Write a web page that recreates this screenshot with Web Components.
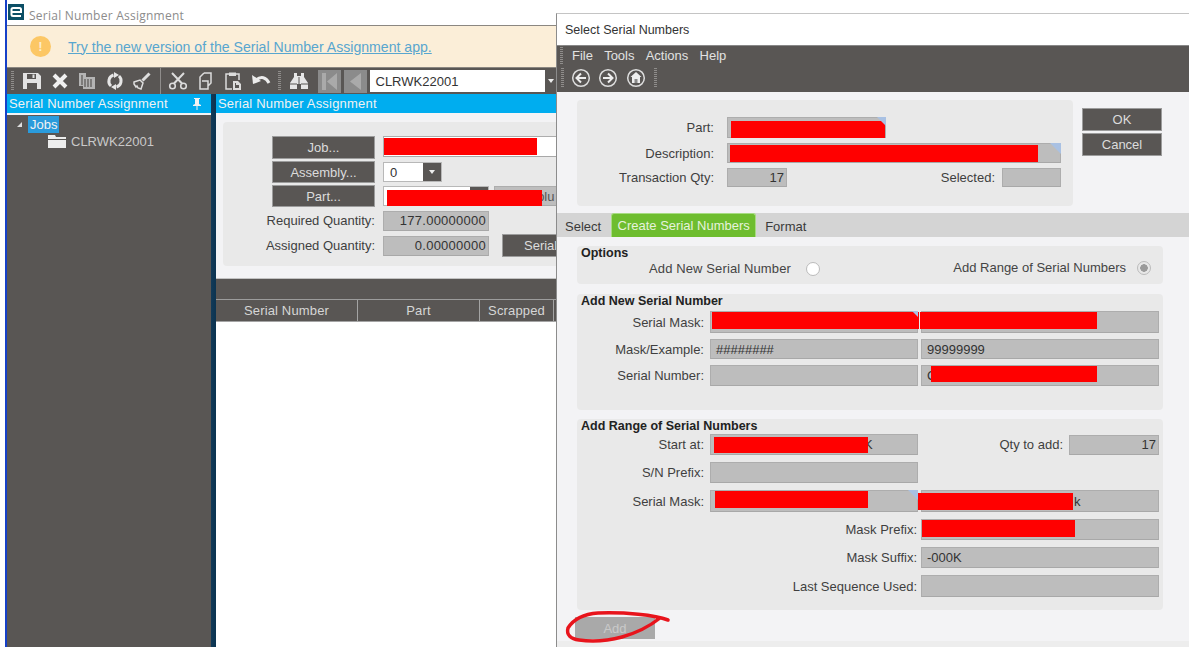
<!DOCTYPE html>
<html>
<head>
<meta charset="utf-8">
<title>Serial Number Assignment</title>
<style>
  html, body { margin: 0; height: 100%; background: #fff; overflow: hidden; }
  body { font: 13px "Liberation Sans", Arial, sans-serif; color: #3a3a3a; }
</style>
</head>
<body>
<main-window></main-window>
<serial-dialog></serial-dialog>

<script>
const UI_FONT = '"Liberation Sans", Arial, sans-serif'

const ICONS = {
  save: '<path fill="#e2e2e2" fill-rule="evenodd" d="M1 2h15l3 3v13H1zM5 3v5h9V3zM5 12v6h10v-6z"/><rect x="10.5" y="3.5" width="2" height="3.5" fill="#e2e2e2"/>',
  close: '<path stroke="#f0f0f0" stroke-width="4" d="M4 4l12 12M16 4L4 16"/>',
  paste: '<path fill="#b4b4b4" d="M2 2h7v4h9v12H6v-3H2z"/><path stroke="#595654" stroke-width="1.2" fill="none" d="M5 4v10M8 8v8M11 8v8M14 8v8"/>',
  refresh: '<path fill="none" stroke="#e6e6e6" stroke-width="3" d="M8.500 4A6.500 6.500 0 0 0 6 15M11.500 16A6.500 6.500 0 0 0 14 5"/><path fill="#e6e6e6" d="M9 1l5 3-5 3zM11 19l-5-3 5-3z"/>',
  brush: '<path fill="none" stroke="#dedede" stroke-width="1.500" d="M2 11l6-2 3 3-2 6-3-1-1-2-1 1-2-3z"/><path stroke="#dedede" stroke-width="3" d="M10.500 9.500l7-7"/>',
  cut: '<circle cx="4.500" cy="15" r="2.800" fill="none" stroke="#dcdcdc" stroke-width="1.600"/><circle cx="15.500" cy="15" r="2.800" fill="none" stroke="#dcdcdc" stroke-width="1.600"/><path stroke="#dcdcdc" stroke-width="2" d="M6 12.500L16 2M14 12.500L4 2"/>',
  copy: '<path fill="none" stroke="#dcdcdc" stroke-width="1.500" d="M8 2h7v10l-3 3M8 2L4 6v12h8v-8H6"/>',
  clip: '<path fill="none" stroke="#dcdcdc" stroke-width="1.500" d="M6 3H3v15h6M13 3h3v6"/><rect x="6" y="1.500" width="7" height="3.500" fill="#dcdcdc"/><path fill="#dcdcdc" d="M10 10h5l3 3v6h-8zM12 12v5h4v-3h-3v-2z"/>',
  undo: '<path fill="none" stroke="#ececec" stroke-width="3" d="M5 9c5-4 10-3 13 3"/><path fill="#ececec" d="M1 4l1 9 8-3z"/>',
  find: '<path fill="#e6e6e6" d="M5 2h3v3h4V2h3v4l4 6v6h-7v-5H8v5H1v-6l4-6z"/><path stroke="#595654" d="M10 6v9M1 13h7M12 13h7"/>',
  back: '<circle cx="10" cy="10" r="8.300" fill="none" stroke="#ddd" stroke-width="1.500"/><path fill="none" stroke="#eee" stroke-width="2" d="M15 10H6M10 5.500L5.500 10l4.500 4.500"/>',
  forward: '<circle cx="10" cy="10" r="8.300" fill="none" stroke="#ddd" stroke-width="1.500"/><path fill="none" stroke="#eee" stroke-width="2" d="M5 10h9M10 5.500l4.500 4.500-4.500 4.500"/>',
  home: '<circle cx="10" cy="10" r="8.300" fill="none" stroke="#ddd" stroke-width="1.500"/><path fill="#eee" d="M10 4l5.500 5H14v6H6V9H4.500z"/><rect x="8.500" y="11" width="3" height="4" fill="#888"/>'
}

class Element_ extends HTMLElement {
  constructor () {
    super()
    this.shadow = this.attachShadow({ mode: 'open' })
  }

  connectedCallback () {
    this.render()
  }
}

class ToolIcon extends Element_ {
  render () {
    this.shadow.innerHTML = /* html */`
      <style>
        :host{ display:block; width:20px; height:20px; }
        svg{ display:block; }
      </style>
      <svg width="20" height="20" viewBox="0 0 20 20">${ICONS[this.getAttribute('name')]}</svg>
    `
  }
}

class GripBar extends Element_ {
  render () {
    this.shadow.innerHTML = /* html */`
      <style>
        :host{
          display:block; width:3px; height:20px;
          background: repeating-linear-gradient(#8f8d8b 0 1px, transparent 1px 2px);
        }
      </style>
    `
  }
}

class DarkButton extends Element_ {
  render () {
    this.shadow.innerHTML = /* html */`
      <style>
        :host{
          display:flex; align-items:center; justify-content:center;
          box-sizing:border-box; border:1px solid #9c9c9c; background:#595654;
          color:#dcdcdc; font:13px ${UI_FONT};
        }
        :host([disabled]){ background:#a9a9a9; border-color:#a9a9a9; color:#c9c9c9; }
      </style>
      <slot></slot>
    `
  }
}

class FormField extends Element_ {
  render () {
    this.shadow.innerHTML = /* html */`
      <style>
        :host{
          display:flex; align-items:center; position:relative;
          box-sizing:border-box; padding:0 5px; background:#bdbdbd;
          border:1px solid #adadad; border-bottom-color:#a8a8a8;
          color:#333; font:13px ${UI_FONT}; white-space:nowrap;
        }
        :host([white]){ background:#fff; }
        :host([right]){ justify-content:flex-end; }
        i{
          position:absolute; top:-1px; right:-1px; width:0; height:0;
          border-style:solid; border-width:0 var(--fold, 0) var(--fold, 0) 0;
          border-color:transparent #a9c1e3 transparent transparent;
        }
      </style>
      <slot></slot><i></i>
    `
  }
}

class RedMark extends Element_ {
  render () {
    this.shadow.innerHTML = '<style>:host{ display:block; position:absolute; background:#ff0000; }</style>'
  }
}

class ComboField extends Element_ {
  render () {
    this.shadow.innerHTML = /* html */`
      <style>
        :host{
          display:flex; position:relative; box-sizing:border-box; background:#fff;
          border:1px solid #b8b8b8; color:#333; font:13px ${UI_FONT};
        }
        span{ flex:1; display:flex; align-items:center; padding-left:6px; }
        b{ width:var(--arrow, 18px); background:#595654; display:flex; align-items:center; justify-content:center; }
        b::after{ content:''; border:3.500px solid transparent; border-top:4px solid #eee; border-bottom:0; }
      </style>
      <span><slot></slot></span><b></b>
    `
  }
}

class GroupBox extends Element_ {
  render () {
    this.shadow.innerHTML = /* html */`
      <style>
        :host{
          display:block; box-sizing:border-box; background:#e9e9e9; border-radius:4px;
          font:13px ${UI_FONT}; color:#3a3a3a;
        }
        h4{
          margin:0; padding-left:4px; font:bold 12.5px/15px ${UI_FONT}; color:#222;
          height:var(--head, 15px);
        }
      </style>
      <h4>${this.getAttribute('heading') || ''}</h4>
      <slot></slot>
    `
  }
}

class FormGrid extends Element_ {
  render () {
    this.shadow.innerHTML = /* html */`
      <style>
        :host{ display:grid; }
        ::slotted(label){
          display:flex; align-items:center; justify-content:flex-end;
          white-space:nowrap; font:13px ${UI_FONT}; color:#3f3f3f;
        }
      </style>
      <slot></slot>
    `
  }
}

class MainToolbar extends Element_ {
  render () {
    this.shadow.innerHTML = /* html */`
      <style>
        :host{
          display:flex; align-items:center; gap:7.5px; box-sizing:border-box;
          height:27px; padding-left:4px; background:#595654;
          border-top:1px solid #8b8781;
        }
        grip-bar{ margin-right:.5px; }
        s{ width:1px; height:27px; background:#8f8d8b; }
        .nav{ display:flex; gap:3px; margin-left:1px; }
        .nav div{
          width:23px; height:23px; background:#8b8b8b; display:flex; align-items:center; justify-content:center;
        }
        combo-field{ width:188px; height:22px; margin-left:-4.500px; border:0; --arrow:12px; }
      </style>
      <grip-bar></grip-bar>
      <tool-icon name="save"></tool-icon>
      <tool-icon name="close"></tool-icon>
      <tool-icon name="paste"></tool-icon>
      <tool-icon name="refresh"></tool-icon>
      <tool-icon name="brush"></tool-icon>
      <s></s>
      <tool-icon name="cut"></tool-icon>
      <tool-icon name="copy"></tool-icon>
      <tool-icon name="clip"></tool-icon>
      <tool-icon name="undo"></tool-icon>
      <grip-bar></grip-bar>
      <tool-icon name="find"></tool-icon>
      <div class="nav">
        <div><svg width="15" height="17" viewBox="0 0 15 17"><path fill="#aaa" d="M0 0h4v17H0zM15 0v17L5 8.500z"/></svg></div>
        <div><svg width="11" height="17" viewBox="0 0 11 17"><path fill="#aaa" d="M11 0v17L0 8.500z"/></svg></div>
      </div>
      <combo-field>CLRWK22001</combo-field>
    `
  }
}

class TreePanel extends Element_ {
  render () {
    this.shadow.innerHTML = /* html */`
      <style>
        :host{ display:block; width:204px; background:#595654; color:#c9c9c9; font:13px ${UI_FONT}; }
        header{
          display:flex; justify-content:space-between; align-items:center;
          height:19px; padding:0 9px 0 2px; background:#00adef; color:#f2f2f2;
          border-bottom:2px solid #f3f3f5; letter-spacing:.2px;
        }
        ul{ list-style:none; margin:0; padding:1px 0 0 10px; }
        .root{ display:flex; align-items:center; gap:6px; height:17px; }
        .root u{ border-style:solid; border-width:0 0 5px 5px; border-color:transparent transparent #ddd transparent; }
        .root span{ background:#2a9bdc; color:#f2f2f2; padding:0 2px; line-height:17px; }
        .job{ display:flex; align-items:center; gap:5px; height:17px; margin:0 0 0 31px; }
      </style>
      <header>Serial Number Assignment
        <svg width="10" height="12" viewBox="0 0 10 12"><path fill="#f2f2f2" d="M2 0h6v1H7v5l2 1v1H5.500v4h-1V8H1V7l2-1V1H2z"/></svg>
      </header>
      <ul>
        <li class="root"><u></u><span>Jobs</span></li>
        <li class="job">
          <svg width="18" height="13" viewBox="0 0 18 13"><path fill="#ededed" d="M0 0h7l1 2h10v2H0zM0 5h18v8H0z"/></svg>
          CLRWK22001
        </li>
      </ul>
    `
  }
}

class JobPanel extends Element_ {
  render () {
    this.shadow.innerHTML = /* html */`
      <style>
        :host{ display:flex; flex-direction:column; flex:1; min-width:0; background:#f3f3f5; font:13px ${UI_FONT}; overflow:hidden; }
        header{ height:19px; line-height:19px; padding-left:2px; background:#00adef; color:#f2f2f2; letter-spacing:.2px; }
        group-box{ margin:9px 0 0 7px; height:144px; --head:0; padding:14px 0 0 49px; border-radius:4px 0 0 4px; }
        form-grid{
          grid-template-columns:103px 106px 1fr;
          grid-template-rows:23px 22px 22px 23px 23px;
          column-gap:8px; row-gap:2px;
        }
        .wide{ grid-column:2 / -1; height:21px; }
        .assembly{ width:59px; height:20px; margin-top:1px; }
        .part{ display:flex; gap:5px; grid-column:2 / -1; position:relative; }
        .part combo-field{ width:106px; height:20px; margin-top:1px; flex:none; }
        .part form-field{ flex:1; height:20px; margin-top:1px; color:#555; padding-left:6px; }
        .qty{ height:20px; align-self:center; letter-spacing:.25px; padding-right:2px; }
        .serial{ margin-left:5px; width:80px; justify-content:flex-start; padding-left:21px; }
        .table{ margin-top:12px; background:#fff; flex:1; border-top:1px solid #c2c2c2; }
        .band{ height:20px; background:#595654; border-bottom:1px solid #9c9c9c; }
        .cols{
          display:grid; grid-template-columns:142px 122px 74px 1fr; height:21px;
          background:#595654; color:#d6d6d6; border-bottom:1px solid #a4a4a4; letter-spacing:.15px;
        }
        .cols div{ display:flex; align-items:center; justify-content:center; border-right:1px solid #a4a4a4; }
        .cols div:last-child{ border-right:0; }
      </style>
      <header>Serial Number Assignment</header>
      <group-box>
        <form-grid>
          <dark-button>Job...</dark-button>
          <form-field white class="wide"><red-mark style="left:0;top:1px;width:153px;height:17px"></red-mark></form-field>
          <dark-button>Assembly...</dark-button>
          <combo-field class="assembly">0</combo-field>
          <span></span>
          <dark-button>Part...</dark-button>
          <div class="part">
            <combo-field></combo-field>
            <form-field>Non Solu</form-field>
            <red-mark style="left:4px;top:5px;width:155px;height:16px"></red-mark>
          </div>
          <label>Required Quantity:</label>
          <form-field right class="qty">177.00000000</form-field>
          <span></span>
          <label>Assigned Quantity:</label>
          <form-field right class="qty">0.00000000</form-field>
          <dark-button class="serial">Serial</dark-button>
        </form-grid>
      </group-box>
      <div class="table">
        <div class="band"></div>
        <div class="cols"><div>Serial Number</div><div>Part</div><div>Scrapped</div><div></div></div>
      </div>
    `
  }
}

class MainWindow extends Element_ {
  render () {
    this.shadow.innerHTML = /* html */`
      <style>
        :host{
          position:absolute; left:5px; top:0; bottom:0; width:552px;
          display:flex; flex-direction:column; box-sizing:border-box;
          border-left:2px solid #1640c8; background:#fff; font:13px ${UI_FONT};
        }
        .title{
          display:flex; align-items:center; gap:5px; box-sizing:content-box; height:20px; padding:5px 0 0 1px;
          color:#8c8c8c; font:12px "Open Sans", sans-serif; letter-spacing:.25px;
          border-bottom:1px solid #8b8781;
        }
        .logo{ width:16px; height:16px; display:block; margin-top:-7px; }
        .banner{ display:flex; align-items:center; height:41px; background:#fbeed8; }
        .alert{
          width:21px; height:21px; border-radius:50%; background:#fcc765; color:#fdeccd;
          margin-left:23px; display:flex; align-items:center; justify-content:center; font:bold 13px ${UI_FONT};
        }
        a{ margin-left:17px; color:#58a6cf; font:14.1px ${UI_FONT}; text-decoration:underline; }
        .panels{ display:flex; flex:1; min-height:0; }
        .split{ width:5px; background:linear-gradient(90deg,#123a58,#0b3350); }
      </style>
      <div class="title">
        <svg class="logo" viewBox="0 0 16 16"><rect width="16" height="16" fill="#0c4f66"/><path fill="none" stroke="#fff" stroke-width="2" d="M13 12H5a1.500 1.500 0 0 1-1.500-1.500v-5A1.500 1.500 0 0 1 5 4h6.500A1.500 1.500 0 0 1 13 5.500V8H3.500"/></svg>
        Serial Number Assignment
      </div>
      <div class="banner">
        <span class="alert">!</span>
        <a href="#">Try the new version of the Serial Number Assignment app.</a>
      </div>
      <main-toolbar></main-toolbar>
      <div class="panels">
        <tree-panel></tree-panel>
        <div class="split"></div>
        <job-panel></job-panel>
      </div>
    `
  }
}

class SerialDialog extends Element_ {
  render () {
    this.shadow.innerHTML = /* html */`
      <style>
        :host{
          position:absolute; left:556px; top:13px; right:0; bottom:0;
          display:flex; flex-direction:column; box-sizing:border-box;
          border-left:1px solid #8c8c8c; border-top:1px solid #c4c4c4;
          background:#f3f3f5; font:13px ${UI_FONT}; color:#3a3a3a;
        }
        .title{ height:31px; line-height:33px; padding-left:8px; background:#fff; font-size:12.5px; color:#333; }
        .bars{ height:47px; background:#595654; color:#e2e2e2; padding-left:3px; border-top:1px solid #888; box-sizing:border-box; }
        .menu{ display:flex; align-items:center; height:18px; }
        .menu span{ margin-right:11.2px; }
        .menu span:first-of-type{ margin-left:9px; }
        .nav{ display:flex; align-items:center; gap:7.500px; height:27px; }
        .nav grip-bar:first-child{ margin-right:-9px; }
        .nav tool-icon:first-of-type{ margin-left:8px; }
        .nav grip-bar{ margin-left:1px; }

        .top{ display:flex; gap:9px; margin:8px 0 0 20px; }
        .head{ width:496px; height:106px; --head:0; padding-top:17px; }
        .head form-grid{
          grid-template-columns:150px 60px 215px 59px;
          grid-template-rows:21px 20px 19px; row-gap:5px;
        }
        .head label{ padding-right:13px; }
        .head .sel{ padding-right:7px; }
        .head form-field[right]{ padding-right:2px; }
        .actions{ display:flex; flex-direction:column; gap:2px; width:80px; margin-top:8px; }
        .actions dark-button{ height:23px; }

        .tabs{ display:flex; height:24px; margin-top:7px; padding-left:8px; background:#d4d4d4; align-items:stretch; }
        .tabs span{ display:flex; align-items:center; padding-top:3px; box-sizing:border-box; }
        .tabs .on{
          width:145px; margin:0 9px 0 10px; padding:0 0 1px; justify-content:center; background:#6ebd2f; color:#e6f2dc;
          border:1px solid #a7db82; border-bottom:0; border-radius:3px 3px 0 0;
        }

        .pages{ margin-left:20px; width:586px; display:flex; flex-direction:column; }
        .options{ margin-top:9px; height:38px; --head:15px; }
        .choices{ display:flex; justify-content:space-between; padding:0 12px 0 72px; color:#444; }
        .choices div{ display:flex; align-items:center; gap:15px; letter-spacing:.12px; }
        .choices div + div{ gap:11px; margin-top:-2px; letter-spacing:0; }
        .radio{ width:12px; height:12px; border-radius:50%; background:#fff; border:1px solid #bbb; box-sizing:content-box; }
        .radio.on{ background:radial-gradient(circle, #9b9b9b 0 3.500px, #e8e8e8 4px); }

        .single{ margin-top:10px; height:116px; --head:17px; }
        .range{ margin-top:9px; height:191px; }
        form-grid.cols{ grid-template-columns:133px 208px 241px; column-gap:0; }
        .cols label{ padding-right:6px; }
        .cols form-field + form-field{ margin-left:3px; }
        .single form-grid{ grid-template-rows:22px 20px 21px; row-gap:6px; }
        .range form-grid{ grid-template-rows:21px 21px 22px 21px 21px 22px; row-gap:7px; }
        .cols .span{ grid-column:1 / 3; padding-right:1px; }
        .third{ grid-column:3; margin-left:3px; }
        .qty{ grid-column:3; display:flex; justify-content:flex-end; gap:6px; color:#3f3f3f; align-items:center; }
        .qty form-field{ width:90px; height:20px; padding-right:2px; }
        .mask{ grid-column:2 / 4; display:grid; grid-template-columns:208px 1fr; }

        .foot{ position:relative; margin:7px 0 0 18px; width:80px; height:22px; }
        .foot dark-button{ height:100%; }
        .ink{ position:absolute; left:-10px; top:-6px; overflow:visible; }
        .rest{ flex:1; margin-top:2px; background:#ededed; }
      </style>
      <div class="title">Select Serial Numbers</div>
      <div class="bars">
        <div class="menu"><grip-bar></grip-bar><span>File</span><span>Tools</span><span>Actions</span><span>Help</span></div>
        <div class="nav">
          <grip-bar></grip-bar>
          <tool-icon name="back"></tool-icon>
          <tool-icon name="forward"></tool-icon>
          <tool-icon name="home"></tool-icon>
          <grip-bar></grip-bar>
        </div>
      </div>

      <div class="top">
        <group-box class="head">
          <form-grid>
            <label>Part:</label>
            <form-field style="grid-column:2 / -1;width:159px;--fold:9px"><red-mark style="left:3px;top:3px;width:154px;height:17px"></red-mark></form-field>
            <label>Description:</label>
            <form-field style="grid-column:2 / -1;width:334px;--fold:11px"><red-mark style="left:2px;top:1px;width:308px;height:17px"></red-mark></form-field>
            <label>Transaction Qty:</label>
            <form-field right>17</form-field>
            <label class="sel">Selected:</label>
            <form-field></form-field>
          </form-grid>
        </group-box>
        <div class="actions">
          <dark-button>OK</dark-button>
          <dark-button>Cancel</dark-button>
        </div>
      </div>

      <div class="tabs"><span>Select</span><span class="on">Create Serial Numbers</span><span>Format</span></div>

      <div class="pages">
        <group-box class="options" heading="Options">
          <div class="choices">
            <div>Add New Serial Number <span class="radio"></span></div>
            <div>Add Range of Serial Numbers <span class="radio on"></span></div>
          </div>
        </group-box>

        <group-box class="single" heading="Add New Serial Number">
          <form-grid class="cols">
            <label>Serial Mask:</label>
            <form-field style="--fold:6px"><red-mark style="left:1px;top:0;width:207px;height:17px"></red-mark></form-field>
            <form-field><red-mark style="left:-2px;top:0;width:177px;height:17px"></red-mark></form-field>
            <label>Mask/Example:</label>
            <form-field>########</form-field>
            <form-field>99999999</form-field>
            <label>Serial Number:</label>
            <form-field></form-field>
            <form-field>C<red-mark style="left:9px;top:0;width:166px;height:16px"></red-mark></form-field>
          </form-grid>
        </group-box>

        <group-box class="range" heading="Add Range of Serial Numbers">
          <form-grid class="cols">
            <label>Start at:</label>
            <form-field style="padding-left:153px">K<red-mark style="left:3px;top:2px;width:154px;height:16px"></red-mark></form-field>
            <div class="qty">Qty to add:<form-field right>17</form-field></div>
            <label>S/N Prefix:</label>
            <form-field></form-field>
            <span></span>
            <label>Serial Mask:</label>
            <div class="mask">
              <form-field style="--fold:10px"><red-mark style="left:4px;top:0;width:153px;height:17px"></red-mark></form-field>
              <form-field style="padding-left:152px">k<red-mark style="left:-4px;top:2px;width:155px;height:17px"></red-mark></form-field>
            </div>
            <label class="span">Mask Prefix:</label>
            <form-field class="third"><red-mark style="left:0;top:0;width:153px;height:17px"></red-mark></form-field>
            <label class="span">Mask Suffix:</label>
            <form-field class="third">-000K</form-field>
            <label class="span">Last Sequence Used:</label>
            <form-field class="third"></form-field>
          </form-grid>
        </group-box>
      </div>

      <div class="foot">
        <dark-button disabled>Add</dark-button>
        <svg class="ink" width="110" height="40" viewBox="0 0 110 40">
          <path fill="none" stroke="#e8141c" stroke-width="3.500" stroke-linecap="round" stroke-linejoin="round"
            d="M103 9C90 4 60 1 33 2 18 3 8 9 3 17 1 24 6 28 14 29c14 2 28 1 43-3 14-4 28-11 38-19"/>
        </svg>
      </div>
      <div class="rest"></div>
    `
  }
}

customElements.define('tool-icon', ToolIcon)
customElements.define('grip-bar', GripBar)
customElements.define('dark-button', DarkButton)
customElements.define('form-field', FormField)
customElements.define('red-mark', RedMark)
customElements.define('combo-field', ComboField)
customElements.define('group-box', GroupBox)
customElements.define('form-grid', FormGrid)
customElements.define('main-toolbar', MainToolbar)
customElements.define('tree-panel', TreePanel)
customElements.define('job-panel', JobPanel)
customElements.define('main-window', MainWindow)
customElements.define('serial-dialog', SerialDialog)
</script>
</body>
</html>
